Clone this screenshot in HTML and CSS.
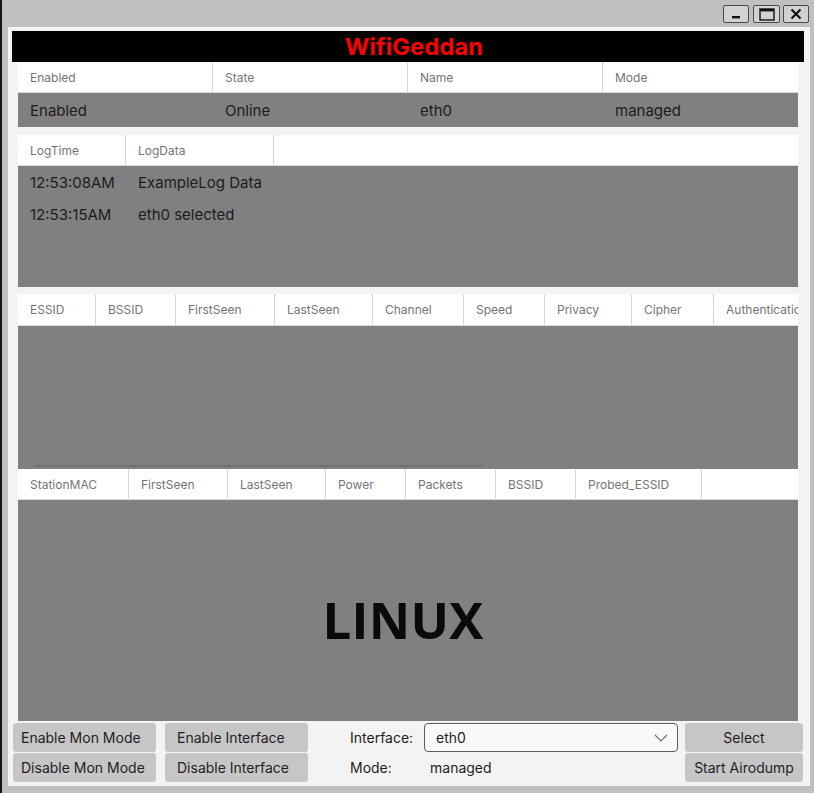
FILE: index.html
```html
<!DOCTYPE html>
<html lang="en">
<head>
<meta charset="utf-8">
<title>WifiGeddan</title>
<link rel="stylesheet" href="styles.css">
</head>
<body>
<div class="window">
  <div class="titlebar">
    <div class="wbtn wbtn-min"><svg width="10" height="4" viewBox="0 0 10 4"><rect x="1" y="1" width="8" height="2.4" fill="#111"/></svg></div>
    <div class="wbtn wbtn-max"><svg width="16" height="13" viewBox="0 0 16 13"><rect x="1" y="1" width="14" height="11" fill="none" stroke="#111" stroke-width="1.4"/><rect x="1" y="1" width="14" height="2.4" fill="#111"/></svg></div>
    <div class="wbtn wbtn-close"><svg width="12" height="12" viewBox="0 0 12 12"><path d="M1.5 1.5 L10.5 10.5 M10.5 1.5 L1.5 10.5" stroke="#111" stroke-width="2.2" fill="none"/></svg></div>
  </div>
  <div class="content">
    <div class="banner">WifiGeddan</div>

    <div class="table t-iface">
      <div class="thead">
        <div class="th">Enabled</div><div class="th">State</div><div class="th">Name</div><div class="th th-last">Mode</div>
      </div>
      <div class="tbody body-iface">
        <div class="tr">
          <div class="td">Enabled</div><div class="td">Online</div><div class="td">eth0</div><div class="td">managed</div>
        </div>
      </div>
    </div>

    <div class="table t-log">
      <div class="thead">
        <div class="th">LogTime</div><div class="th">LogData</div><div class="th th-last"></div>
      </div>
      <div class="tbody body-log">
        <div class="tr"><div class="td">12:53:08AM</div><div class="td">ExampleLog Data</div><div class="td"></div></div>
        <div class="tr"><div class="td">12:53:15AM</div><div class="td">eth0 selected</div><div class="td"></div></div>
      </div>
    </div>

    <div class="table t-ap">
      <div class="thead">
        <div class="th">ESSID</div><div class="th">BSSID</div><div class="th">FirstSeen</div><div class="th">LastSeen</div><div class="th">Channel</div><div class="th">Speed</div><div class="th">Privacy</div><div class="th">Cipher</div><div class="th th-last th-clip">Authentication</div>
      </div>
      <div class="tbody body-ap">
        <div class="hscroll"></div>
      </div>
    </div>

    <div class="table t-sta">
      <div class="thead">
        <div class="th">StationMAC</div><div class="th">FirstSeen</div><div class="th">LastSeen</div><div class="th">Power</div><div class="th">Packets</div><div class="th">BSSID</div><div class="th">Probed_ESSID</div><div class="th th-last"></div>
      </div>
      <div class="tbody body-sta">
        <div class="logo">LINUX</div>
      </div>
    </div>

    <div class="controls">
      <button class="btn btn-left c1">Enable Mon Mode</button>
      <button class="btn btn-left btn-pad c2">Enable Interface</button>
      <div class="label c3">Interface:</div>
      <div class="select c4"><span>eth0</span><svg width="14" height="8" viewBox="0 0 14 8"><path d="M1 1 L7 7 L13 1" fill="none" stroke="#6a6a6a" stroke-width="1.1"/></svg></div>
      <button class="btn c5">Select</button>

      <button class="btn btn-left c1">Disable Mon Mode</button>
      <button class="btn btn-left btn-pad c2">Disable Interface</button>
      <div class="label c3">Mode:</div>
      <div class="value c4">managed</div>
      <button class="btn c5">Start Airodump</button>
    </div>
  </div>
</div>
</body>
</html>
```
FILE: styles.css
```css
* { box-sizing: border-box; }
html, body { margin: 0; padding: 0; }
body {
  background: #0e1a0c;
  font-family: "Inter", "Noto Sans", sans-serif;
  width: 814px;
  height: 793px;
  overflow: hidden;
}
.window {
  margin-left: 2px;
  width: 812px;
  height: 793px;
  background: #c0c0c0;
  padding: 0 4px 7px 6px;
  display: flex;
  flex-direction: column;
}
.titlebar {
  height: 27px;
  display: flex;
  justify-content: flex-end;
  align-items: flex-start;
  padding-top: 5px;
  padding-right: 1px;
}
.wbtn {
  height: 18px;
  width: 26px;
  margin-left: 4px;
  background: #d2d2d2;
  border: 1px solid #4a4a4a;
  border-radius: 2px;
  display: flex;
  align-items: center;
  justify-content: center;
}
.wbtn-min { align-items: flex-end; padding-bottom: 3px; }
.wbtn-max { width: 27px; }
.wbtn-close { margin-left: 3px; }

.content {
  flex: 1;
  background: #f3f3f3;
  padding: 4px 6px 4px 4px;
  display: flex;
  flex-direction: column;
}
.banner {
  height: 31px;
  background: #000;
  color: #ff0000;
  font-weight: 700;
  font-size: 23.5px;
  display: flex;
  align-items: center;
  justify-content: center;
  padding-left: 12px;
  letter-spacing: 0.2px;
}
.table {
  margin: 0 6px;
  overflow: hidden;
}
.thead {
  display: grid;
  height: 31px;
  background: #fff;
  border-bottom: 1px solid #d8d8d8;
}
.th {
  display: flex;
  align-items: center;
  padding-left: 12px;
  font-size: 12px;
  color: #747474;
  border-right: 1px solid #d8d8d8;
  white-space: nowrap;
  overflow: hidden;
}
.th-last { border-right: none; }
.th-clip { padding-left: 12px; }
.tbody {
  background: #808080;
}
.tr {
  display: grid;
}
.td {
  display: flex;
  align-items: center;
  padding-left: 12px;
  font-size: 15px;
  color: #1c1c1c;
  white-space: nowrap;
}

.t-iface .thead, .t-iface .tr { grid-template-columns: 195px 195px 195px 1fr; }
.body-iface { height: 34px; }
.body-iface .tr { height: 34px; }

.t-log { margin-top: 8px; }
.t-log .thead, .t-log .tr { grid-template-columns: 108px 148px 1fr; }
.body-log { height: 121px; }
.body-log .tr { height: 32px; }

.t-ap { margin-top: 7px; }
.t-ap .thead { height: 32px; grid-template-columns: 78px 80px 99px 98px 91px 81px 87px 82px 84px; }
.body-ap {
  height: 143px;
  display: flex;
  align-items: flex-end;
  padding: 0 0 2px 16px;
}
.hscroll {
  width: 448px;
  height: 2px;
  background: #707070;
}

.t-sta .thead { grid-template-columns: 111px 99px 98px 80px 90px 80px 126px 1fr; }
.body-sta {
  height: 221px;
  display: flex;
  align-items: center;
  justify-content: center;
  padding: 16px 10px 0 0;
}
.logo {
  font-family: "Open Sans", "DejaVu Sans", sans-serif;
  font-weight: 700;
  font-size: 51px;
  color: #0a0a0a;
  letter-spacing: 0.3px;
  filter: blur(0.4px);
}

.controls {
  margin: 2px 1px 0 1px;
  display: grid;
  grid-template-columns: 143px 152px 116px 261px 118px;
  grid-auto-rows: 29px;
  row-gap: 1px;
}
.btn {
  font-family: inherit;
  font-size: 14px;
  color: #1e1e1e;
  background: #c6c6c6;
  border: none;
  border-radius: 3px;
  padding: 0;
  margin: 0;
  height: 29px;
  text-align: center;
}
.btn-left { text-align: left; padding-left: 8px; }
.btn-pad { padding-left: 12px; }
.c1 { width: 143px; }
.c2 { width: 143px; justify-self: end; }
.c3 { width: 74px; justify-self: end; }
.c4 { width: 254px; }
.c5 { width: 118px; }
.label, .value {
  font-size: 14px;
  color: #1e1e1e;
  display: flex;
  align-items: center;
}
.value { padding-left: 6px; }
.select {
  height: 29px;
  background: #f9f9f9;
  border: 1px solid #5c5c5c;
  border-radius: 4px;
  display: flex;
  align-items: center;
  justify-content: space-between;
  padding: 0 9px 0 11px;
  font-size: 14px;
  color: #1e1e1e;
}
```
